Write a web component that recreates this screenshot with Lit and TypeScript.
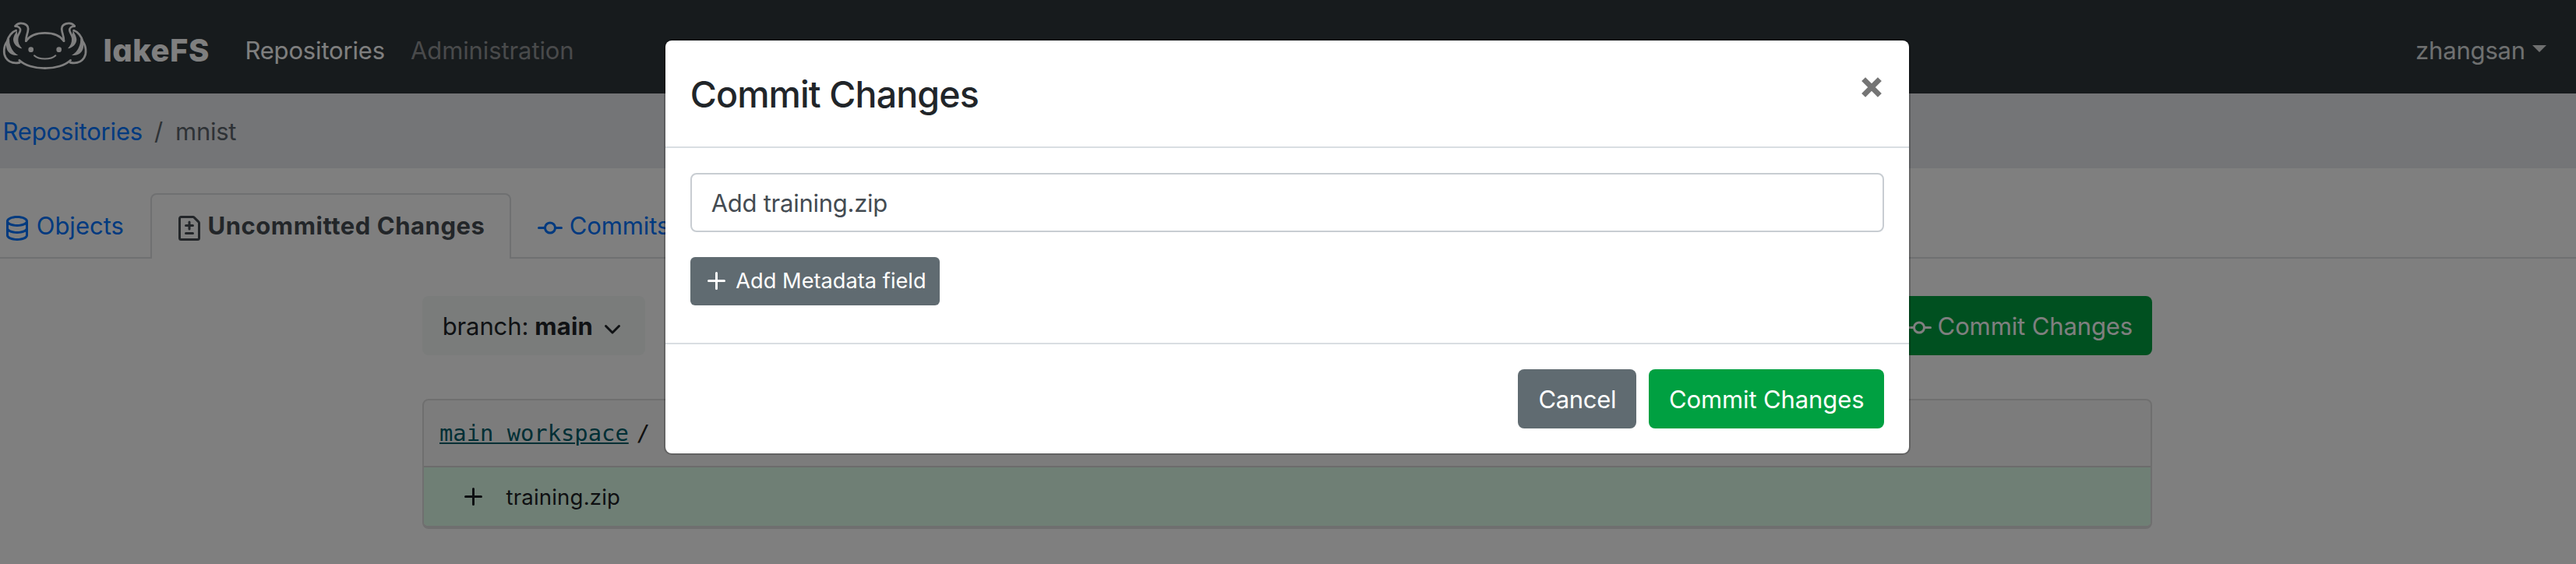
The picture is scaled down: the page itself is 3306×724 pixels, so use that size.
import { LitElement, html, svg, css } from "lit";
import { customElement } from "lit/decorators.js";

const gill = svg`
  <path d="M59 100C66 91 79 88 91 91C107 95 111 107 107 122C104 134 100 143 100 158" />
  <path d="M59 101C72 101 80 109 78 118C76 128 67 136 66 148" />
  <path class="solid" d="M64 112C67 122 52 134 51 152C52 170 66 184 85 187C74 175 69 164 70 150Z" />
  <path d="M62 117C46 122 32 141 27 160C14 178 12 206 22 222C34 241 54 245 76 241" />
  <path class="solid" d="M30 152C21 165 22 186 33 200C43 212 57 214 70 212C54 204 42 188 37 164L36 148Z" />
  <path d="M74 232C95 252 134 263 173 263" />`;

const logo = html`<svg class="logo" viewBox="0 0 360 360">
  <g>${gill}</g>
  <g transform="translate(346 0) scale(-1 1)">${gill}</g>
  <path d="M100 158C112 140 138 127 173 127S234 140 246 158" />
  <path class="smile" d="M132 214C150 231 196 231 214 214" />
  <circle class="solid" cx="119" cy="191" r="10" />
  <circle class="solid" cx="227" cy="191" r="10" />
</svg>`;

const icon = (d: string) => html`<svg class="icon" viewBox="0 0 16 16"><path fill-rule="evenodd" d=${d} /></svg>`;

const database = icon("M2.5 3.5c0-.133.058-.318.282-.55.227-.237.592-.484 1.1-.708C4.899 1.795 6.354 1.5 8 1.5c1.647 0 3.102.295 4.117.742.51.224.874.47 1.101.707.224.233.282.418.282.551 0 .133-.058.318-.282.55-.227.237-.592.484-1.1.708C11.101 5.205 9.646 5.5 8 5.5c-1.647 0-3.102-.295-4.117-.742-.51-.224-.874-.47-1.101-.707-.224-.233-.282-.418-.282-.551zM1 3.5c0-.626.292-1.165.7-1.59.406-.422.956-.767 1.579-1.041C4.525.32 6.195 0 8 0c1.805 0 3.475.32 4.722.869.622.274 1.172.62 1.578 1.04.408.426.7.965.7 1.591v9c0 .626-.292 1.165-.7 1.59-.406.422-.956.767-1.579 1.041C11.476 15.68 9.806 16 8 16c-1.805 0-3.475-.32-4.721-.869-.623-.274-1.173-.62-1.579-1.04-.408-.426-.7-.965-.7-1.591v-9zM2.5 8V5.724c.241.15.503.286.779.407C4.525 6.68 6.195 7 8 7c1.805 0 3.475-.32 4.722-.869.275-.121.537-.257.778-.407V8c0 .133-.058.318-.282.55-.227.237-.592.484-1.1.708C11.101 9.705 9.646 10 8 10c-1.647 0-3.102-.295-4.117-.742-.51-.224-.874-.47-1.101-.707C2.558 8.318 2.5 8.133 2.5 8zm0 2.225V12.5c0 .133.058.318.282.55.227.237.592.484 1.1.708 1.016.447 2.471.742 4.118.742 1.647 0 3.102-.295 4.117-.742.51-.224.874-.47 1.101-.707.224-.233.282-.418.282-.551v-2.275c-.241.15-.503.285-.778.406-1.247.549-2.917.869-4.722.869-1.805 0-3.475-.32-4.721-.869a6.236 6.236 0 01-.779-.406z");
const fileDiff = icon("M2.75 1.5a.25.25 0 00-.25.25v12.5c0 .138.112.25.25.25h10.5a.25.25 0 00.25-.25V4.664a.25.25 0 00-.073-.177l-2.914-2.914a.25.25 0 00-.177-.073H2.75zM1 1.75C1 .784 1.784 0 2.75 0h7.586c.464 0 .909.184 1.237.513l2.914 2.914c.329.328.513.773.513 1.237v9.586A1.75 1.75 0 0113.25 16H2.75A1.75 1.75 0 011 14.25V1.75zm7 1.5a.75.75 0 01.75.75v1.5h1.5a.75.75 0 010 1.5h-1.5v1.5a.75.75 0 01-1.5 0V7h-1.5a.75.75 0 010-1.5h1.5V4A.75.75 0 018 3.25zm-3 8a.75.75 0 01.75-.75h4.5a.75.75 0 010 1.5h-4.5a.75.75 0 01-.75-.75z");
const commit = icon("M10.5 7.75a2.5 2.5 0 11-5 0 2.5 2.5 0 015 0zm1.43.75a4.002 4.002 0 01-7.86 0H.75a.75.75 0 110-1.5h3.32a4.001 4.001 0 017.86 0h3.32a.75.75 0 110 1.5h-3.32z");
const plus = icon("M7.75 2a.75.75 0 01.75.75V7h4.25a.75.75 0 110 1.5H8.5v4.25a.75.75 0 11-1.5 0V8.5H2.75a.75.75 0 010-1.5H7V2.75A.75.75 0 017.75 2z");
const chevron = icon("M12.78 6.22a.75.75 0 010 1.06l-4.25 4.25a.75.75 0 01-1.06 0L3.22 7.28a.75.75 0 011.06-1.06L8 9.94l3.72-3.72a.75.75 0 011.06 0z");

@customElement("app-root")
export class AppRoot extends LitElement {
  static styles = css`
    * { box-sizing: border-box; }
    :host {
      display: block; position: relative; width: 3306px; height: 724px; overflow: hidden;
      background: #fff; color: #212529;
      font: 400 31px/48px Inter, "Liberation Sans", sans-serif; letter-spacing: -0.17px;
      white-space: nowrap;
    }
    svg { display: block; flex: none; }
    .icon { width: 32px; height: 32px; fill: currentColor; }
    .nav { display: flex; height: 120px; background: #2e363b; color: #fff; }
    .logo { width: 120px; height: 120px; fill: none; stroke: currentColor; stroke-width: 8; stroke-linecap: round; stroke-linejoin: round; }
    .logo .solid { fill: currentColor; stroke: none; }
    .logo .smile { stroke-width: 6; }
    .brand { width: 182px; margin-left: 12.4px; padding-top: 41px; font-size: 40px; font-weight: 800; letter-spacing: 0.5px; font-feature-settings: "cv11"; }
    .link { padding-top: 41px; width: 212.6px; }
    .dim { color: #929597; letter-spacing: -0.1px; }
    .user { display: flex; margin-left: auto; padding: 41px 38px 0 0; color: #dfe0e1; }
    .caret { width: 0; height: 0; margin: 17px 0 0 9px; border: 9.5px solid transparent; border-top-color: currentColor; border-bottom: 0; }
    .crumbs { display: flex; height: 96px; padding: 25px 0 0 3.5px; background: #e9ebee; }
    .blue { color: #0074ff; }
    .sep { width: 42px; padding-left: 15px; color: #5c656c; }
    .here { color: #5c656c; letter-spacing: -0.26px; }
    .tabs { display: flex; height: 116px; padding-top: 32px; border-bottom: 2px solid #dfe1e3; }
    .tab { display: flex; height: 84px; padding: 16px 34px 0; border: 2px solid transparent; border-bottom: 0; }
    .tab .icon { margin-top: 11px; }
    .objects { width: 193px; padding-left: 4px; letter-spacing: 0; }
    .objects .icon, .commits .icon { margin-right: 8.7px; }
    .active { width: 463px; padding: 16px 0 0 32px; border-color: #dfe1e3; border-radius: 8px 8px 0 0; background: #fff; color: #464d53; font-weight: 700; letter-spacing: 0.53px; }
    .active .icon { margin-right: 7.5px; }
    .commits { padding-left: 32px; letter-spacing: -0.1px; }
    .main { width: 2220px; margin: 48px auto 0 542px; }
    .bar { display: flex; justify-content: space-between; }
    .btn { display: flex; height: 76px; padding: 15px 24px 0; border: 0; border-radius: 8px; color: #fff; letter-spacing: -0.12px; }
    .green { background: #00a041; }
    .grey { background: #606b71; }
    .branch { width: 286px; padding-left: 25.7px; background: #f4f8f7; color: #212529; }
    .branch b { margin-left: 8px; letter-spacing: 0.2px; }
    .branch .icon { margin: 10px 0 0 8.5px; }
    .push { width: 340px; justify-content: flex-end; padding-right: 25px; }
    .push .icon { margin: 10px 7.7px 0 0; }
    .card { height: 167px; margin-top: 56px; border: 2px solid #dedede; border-bottom-width: 4px; border-radius: 8px; overflow: hidden; background: #f8f8f8; }
    .path { display: flex; height: 86px; padding: 18px 0 0 20px; border-bottom: 2px solid #d8d8d8; font: 28.8px/48px "DejaVu Sans Mono", monospace; letter-spacing: 0; color: #222; }
    .path u { width: 252.7px; color: #005f6b; text-decoration-thickness: 2px; text-underline-offset: 2px; }
    .row { display: flex; height: 76px; padding: 13.5px 0 0 48px; background: #dfffea; color: #1d2125; font-size: 27.6px; letter-spacing: 0.17px; }
    .row .icon { margin: 8.5px 25.5px 0 0; }

    .backdrop { position: absolute; inset: 0; background: rgba(0, 0, 0, 0.5); }
    .modal { position: absolute; top: 50px; left: 852px; width: 1600px; height: 534px; border: 2px solid rgba(0, 0, 0, 0.2); border-radius: 10px; background: #fff; background-clip: padding-box; }
    .head { display: flex; justify-content: space-between; height: 138px; padding: 33px 35px 0 31.7px; border-bottom: 2px solid #d9dee2; }
    .title { font-size: 46.5px; line-height: 72px; font-weight: 500; letter-spacing: -0.87px; }
    .close { width: 26px; height: 26px; margin-top: 14px; stroke: #757575; stroke-width: 7; stroke-linecap: butt; }
    .body { height: 252px; padding: 32px; border-bottom: 2px solid #d9dee2; }
    .input { display: flex; height: 76px; padding: 13px 0 0 24.7px; border: 2px solid #c8cdd2; border-radius: 8px; color: #444b52; letter-spacing: -0.26px; }
    .meta { width: 320px; height: 62px; margin-top: 32px; padding: 7px 0 0 18px; border-radius: 6px; font-size: 27.2px; letter-spacing: 0.02px; }
    .meta .icon { margin: 8px 8.3px 0 0; }
    .foot { display: flex; justify-content: flex-end; gap: 16px; padding: 32px; }
    .cancel { width: 152px; padding-left: 26.4px; letter-spacing: -0.33px; }
    .ok { width: 302px; padding-left: 26px; }
  `;

  render() {
    return html`
      <div class="nav">
        ${logo}
        <div class="brand">lakeFS</div>
        <div class="link">Repositories</div>
        <div class="link dim">Administration</div>
        <div class="user"><span>zhangsan</span><i class="caret"></i></div>
      </div>
      <div class="crumbs">
        <span class="blue">Repositories</span><span class="sep">/</span><span class="here">mnist</span>
      </div>
      <div class="tabs">
        <div class="tab objects blue">${database}<span>Objects</span></div>
        <div class="tab active">${fileDiff}<span>Uncommitted Changes</span></div>
        <div class="tab commits blue">${commit}<span>Commits</span></div>
      </div>
      <div class="main">
        <div class="bar">
          <div class="btn branch"><span>branch:</span><b>main</b>${chevron}</div>
          <div class="btn green push">${commit}<span>Commit Changes</span></div>
        </div>
        <div class="card">
          <div class="path"><u>main workspace</u><span>/</span></div>
          <div class="row">${plus}<span>training.zip</span></div>
        </div>
      </div>
      <div class="backdrop"></div>
      <div class="modal">
        <div class="head">
          <div class="title">Commit Changes</div>
          <svg class="close" viewBox="0 0 26 26"><path d="M2.6 2.6L23.4 23.4M23.4 2.6L2.6 23.4" /></svg>
        </div>
        <div class="body">
          <div class="input">Add training.zip</div>
          <div class="btn grey meta">${plus}<span>Add Metadata field</span></div>
        </div>
        <div class="foot">
          <div class="btn grey cancel">Cancel</div>
          <div class="btn green ok">Commit Changes</div>
        </div>
      </div>`;
  }
}
